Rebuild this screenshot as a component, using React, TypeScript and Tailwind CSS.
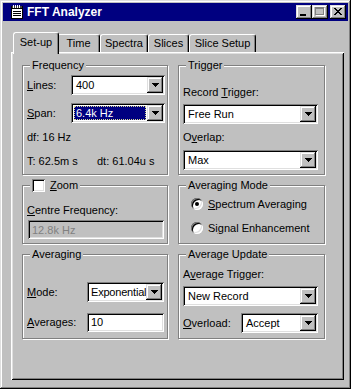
import React from "react";

const SUNKEN =
  "shadow-[inset_1px_1px_0_#808080,inset_-1px_-1px_0_#ffffff,inset_2px_2px_0_#000000,inset_-2px_-2px_0_#dfdfdf]";
const RAISED =
  "shadow-[inset_-1px_-1px_0_#000000,inset_1px_1px_0_#dfdfdf,inset_-2px_-2px_0_#808080,inset_2px_2px_0_#ffffff]";

function U({ children }: { children: React.ReactNode }) {
  return <span className="underline underline-offset-[1px]">{children}</span>;
}

function Arrow() {
  return (
    <svg width="7" height="4" viewBox="0 0 7 4" shapeRendering="crispEdges">
      <rect x="0" y="0" width="7" height="1" fill="#000" />
      <rect x="1" y="1" width="5" height="1" fill="#000" />
      <rect x="2" y="2" width="3" height="1" fill="#000" />
      <rect x="3" y="3" width="1" height="1" fill="#000" />
    </svg>
  );
}

function Combo({
  text,
  className,
  selected,
  tight,
}: {
  text: string;
  className: string;
  selected?: boolean;
  tight?: boolean;
}) {
  return (
    <div className={`flex h-[20px] bg-white p-[2px] ${SUNKEN} ${className}`}>
      <div className="flex min-w-0 flex-1 items-center overflow-hidden whitespace-nowrap">
        {selected ? (
          <div className="m-[1px] flex h-[14px] flex-1 items-center border border-dotted border-[#d8d890] bg-[#000080] pl-[1px] text-white">
            {text}
          </div>
        ) : (
          <span className={tight ? "pl-[2px] tracking-[-0.2px]" : "pl-[3px]"}>{text}</span>
        )}
      </div>
      <div className={`flex h-full w-[16px] shrink-0 items-center justify-center bg-[#c0c0c0] ${RAISED}`}>
        <Arrow />
      </div>
    </div>
  );
}

function Field({ text, className, disabled }: { text: string; className: string; disabled?: boolean }) {
  return (
    <div
      className={`flex items-center pl-[4px] ${SUNKEN} ${
        disabled ? "bg-[#c0c0c0] text-[#808080]" : "bg-white"
      } ${className}`}
    >
      {text}
    </div>
  );
}

function Group({
  title,
  children,
}: {
  title: React.ReactNode;
  children: React.ReactNode;
}) {
  return (
    <div className="relative border border-[#808080] shadow-[inset_1px_1px_0_#ffffff,1px_1px_0_#ffffff]">
      <div className="absolute left-[7px] top-[-8px] bg-[#c0c0c0] px-[2px] leading-[14px]">{title}</div>
      {children}
    </div>
  );
}

function Radio({ checked }: { checked?: boolean }) {
  return (
    <div className="flex h-[12px] w-[12px] items-center justify-center rounded-full bg-white shadow-[inset_1px_1px_0_#808080,inset_-1px_-1px_0_#ffffff,inset_2px_2px_0_#000000,inset_-2px_-2px_0_#dfdfdf]">
      {checked && <div className="h-[4px] w-[4px] rounded-full bg-black" />}
    </div>
  );
}

function TitleIcon() {
  return (
    <svg width="14" height="14" viewBox="0 0 14 14" shapeRendering="crispEdges">
      <rect x="1" y="1" width="12" height="13" fill="#000" />
      <rect x="2" y="4" width="10" height="9" fill="#fff" />
      <rect x="2" y="1" width="10" height="2" fill="#404040" />
      <rect x="3" y="0" width="1" height="3" fill="#fff" />
      <rect x="5" y="0" width="1" height="3" fill="#fff" />
      <rect x="7" y="0" width="1" height="3" fill="#fff" />
      <rect x="9" y="0" width="1" height="3" fill="#fff" />
      <rect x="3" y="6" width="8" height="1" fill="#000" />
      <rect x="3" y="8" width="8" height="1" fill="#000" />
      <rect x="3" y="10" width="8" height="1" fill="#000" />
    </svg>
  );
}

function TitleButton({ children, className = "" }: { children: React.ReactNode; className?: string }) {
  return (
    <div className={`flex h-[14px] w-[16px] items-center justify-center bg-[#c0c0c0] ${RAISED} ${className}`}>
      {children}
    </div>
  );
}

function TitleBar() {
  return (
    <div className="flex h-[18px] items-center bg-[#000080] pr-[2px]">
      <div className="ml-[6px] flex h-[16px] w-[16px] items-center justify-center">
        <TitleIcon />
      </div>
      <div className="ml-[2px] text-[12px] font-bold leading-[16px] text-white">FFT Analyzer</div>
      <div className="flex-1" />
      <TitleButton>
        <svg width="16" height="14" viewBox="0 0 16 14" shapeRendering="crispEdges">
          <rect x="4" y="9" width="6" height="2" fill="#000" />
        </svg>
      </TitleButton>
      <TitleButton>
        <svg width="16" height="14" viewBox="0 0 16 14" shapeRendering="crispEdges">
          <rect x="4" y="3" width="9" height="8" fill="#ffffff" />
          <rect x="3" y="2" width="9" height="8" fill="#808080" />
          <rect x="4" y="4" width="7" height="5" fill="#c0c0c0" />
        </svg>
      </TitleButton>
      <TitleButton className="ml-[2px]">
        <svg width="16" height="14" viewBox="0 0 16 14" shapeRendering="crispEdges">
          <g fill="#000">
            <rect x="4" y="3" width="2" height="1" />
            <rect x="10" y="3" width="2" height="1" />
            <rect x="5" y="4" width="2" height="1" />
            <rect x="9" y="4" width="2" height="1" />
            <rect x="6" y="5" width="4" height="1" />
            <rect x="7" y="6" width="2" height="1" />
            <rect x="6" y="7" width="4" height="1" />
            <rect x="5" y="8" width="2" height="1" />
            <rect x="9" y="8" width="2" height="1" />
            <rect x="4" y="9" width="2" height="1" />
            <rect x="10" y="9" width="2" height="1" />
          </g>
        </svg>
      </TitleButton>
    </div>
  );
}

function Tab({
  label,
  w,
  selected,
}: {
  label: string;
  w: string;
  selected?: boolean;
}) {
  return (
    <div
      className={`flex items-start justify-center rounded-t-[3px] border-l border-r border-t border-l-white border-r-black border-t-white bg-[#c0c0c0] shadow-[inset_-1px_0_0_#808080] ${
        selected
          ? "relative z-10 mx-[-2px] mb-[-2px] h-[22px] pt-[2px]"
          : "h-[18px] pt-[1px]"
      } ${w}`}
    >
      {label}
    </div>
  );
}

export default function App() {
  return (
    <div className="h-[389px] w-[351px] bg-[#c0c0c0] p-[3px] font-['Liberation_Sans',Arial,sans-serif] text-[11px] leading-[14px] text-black shadow-[inset_-1px_-1px_0_#000000,inset_1px_1px_0_#dfdfdf,inset_-2px_-2px_0_#808080,inset_2px_2px_0_#ffffff]">
      <TitleBar />
      <div className="pl-[8px] pt-[11px]">
        <div className="flex h-[20px] items-end pl-[4px]">
          <Tab label="Set-up" w="w-[46px]" selected />
          <Tab label="Time" w="w-[43px]" />
          <Tab label="Spectra" w="w-[48px]" />
          <Tab label="Slices" w="w-[41px]" />
          <Tab label="Slice Setup" w="w-[67px]" />
        </div>
        <div className="h-[328px] w-[333px] pl-[11px] pt-[13px] shadow-[inset_1px_1px_0_#ffffff,inset_-1px_-1px_0_#000000,inset_2px_2px_0_#dfdfdf,inset_-2px_-2px_0_#808080]">
          <div className="grid grid-cols-[146px_147px] grid-rows-[110px_59px_85px] gap-x-[10px] gap-y-[10px]">
            {/* Frequency */}
            <Group title="Frequency">
              <div className="mt-[9px] flex h-[20px] items-center pl-[4px]">
                <div className="w-[44px]">
                  <U>L</U>ines:
                </div>
                <Combo text="400" className="w-[94px]" />
              </div>
              <div className="mt-[8px] flex h-[20px] items-center pl-[4px]">
                <div className="w-[44px]">
                  <U>S</U>pan:
                </div>
                <Combo text="6.4k Hz" className="w-[94px]" selected />
              </div>
              <div className="mt-[7px] h-[14px] pl-[4px]">df: 16 Hz</div>
              <div className="mt-[10px] flex h-[14px] pl-[4px]">
                <div className="w-[70px]">T: 62.5m s</div>
                <div>dt: 61.04u s</div>
              </div>
            </Group>

            {/* Trigger */}
            <Group title="Trigger">
              <div className="mt-[19px] h-[14px] pl-[4px]">
                Record <U>T</U>rigger:
              </div>
              <div className="mt-[5px] pl-[4px]">
                <Combo text="Free Run" className="w-[135px]" />
              </div>
              <div className="mt-[6px] h-[14px] pl-[4px]">
                O<U>v</U>erlap:
              </div>
              <div className="mt-[6px] pl-[4px]">
                <Combo text="Max" className="w-[135px]" />
              </div>
            </Group>

            {/* Zoom */}
            <Group
              title={
                <div className="flex items-center gap-[5px]">
                  <div className={`h-[13px] w-[13px] bg-white ${SUNKEN}`} />
                  <span>
                    <U>Z</U>oom
                  </span>
                </div>
              }
            >
              <div className="mt-[17px] h-[14px] pl-[4px]">
                <U>C</U>entre Frequency:
              </div>
              <div className="mt-[3px] pl-[5px]">
                <Field text="12.8k Hz" className="h-[19px] w-[136px]" disabled />
              </div>
            </Group>

            {/* Averaging Mode */}
            <Group title="Averaging Mode">
              <div className="mt-[11px] flex h-[14px] items-center gap-[5px] pl-[12px]">
                <Radio checked />
                <span>
                  <U>S</U>pectrum Averaging
                </span>
              </div>
              <div className="mt-[10px] flex h-[14px] items-center gap-[5px] pl-[12px]">
                <Radio />
                <span>
                  Si<U>g</U>nal Enhancement
                </span>
              </div>
            </Group>

            {/* Averaging */}
            <Group title="Averaging">
              <div className="mt-[27px] flex h-[20px] items-center pl-[4px]">
                <div className="w-[60px]">
                  <U>M</U>ode:
                </div>
                <Combo text="Exponential" className="w-[77px]" tight />
              </div>
              <div className="mt-[10px] flex h-[20px] items-center pl-[4px]">
                <div className="w-[60px]">
                  <U>A</U>verages:
                </div>
                <Field text="10" className="h-[19px] w-[77px]" />
              </div>
            </Group>

            {/* Average Update */}
            <Group title="Average Update">
              <div className="mt-[12px] h-[14px] pl-[4px]">
                A<U>v</U>erage Trigger:
              </div>
              <div className="mt-[5px] pl-[4px]">
                <Combo text="New Record" className="w-[135px]" />
              </div>
              <div className="mt-[7px] flex h-[20px] items-center pl-[4px]">
                <div className="w-[58px]">
                  <U>O</U>verload:
                </div>
                <Combo text="Accept" className="w-[77px]" />
              </div>
            </Group>
          </div>
        </div>
      </div>
    </div>
  );
}
